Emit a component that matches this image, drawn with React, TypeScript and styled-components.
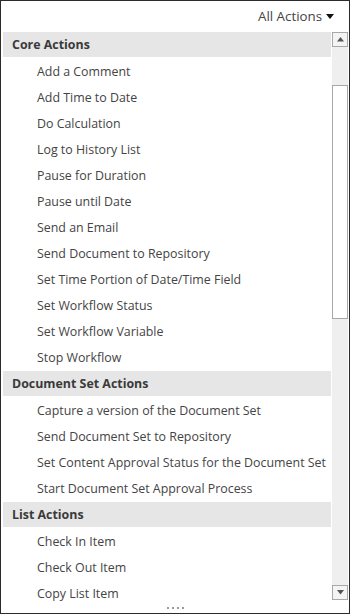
import React from "react";
import styled, { createGlobalStyle } from "styled-components";

const GlobalStyle = createGlobalStyle`
  html, body {
    margin: 0;
    padding: 0;
    background: #ffffff;
  }
  * {
    box-sizing: border-box;
  }
`;

const Panel = styled.div`
  position: relative;
  width: 350px;
  height: 614px;
  border: 1px solid #2b2b2b;
  background: #fff;
  display: flex;
  flex-direction: column;
  overflow: hidden;
  font-family: "Open Sans", "Noto Sans", sans-serif;
`;

const Toolbar = styled.div`
  height: 30px;
  display: flex;
  align-items: center;
  justify-content: flex-end;
  padding-right: 15px;
  font-size: 13.3px;
  color: #444;
  gap: 4px;
  flex-shrink: 0;
`;

const Body = styled.div`
  flex: 1;
  display: flex;
  min-height: 0;
`;

const List = styled.div`
  flex: 1;
  overflow: hidden;
`;

const GroupHeader = styled.div`
  height: 25px;
  margin: 1px 0 1px 2px;
  background: #e6e6e6;
  display: flex;
  align-items: center;
  padding-left: 9px;
  font-weight: 700;
  font-size: 12.4px;
  color: #3a3a3a;
`;

const Item = styled.div`
  height: 26px;
  display: flex;
  align-items: center;
  padding-left: 36px;
  font-size: 12.4px;
  color: #444;
  white-space: nowrap;
`;

const Scrollbar = styled.div`
  width: 16px;
  margin: 1px 1px 13px 1px;
  background: #efefef;
  display: flex;
  flex-direction: column;
`;

const ScrollButton = styled.div`
  height: 15px;
  border: 1px solid #a8a8a8;
  background: #f4f4f4;
  display: flex;
  align-items: center;
  justify-content: center;
`;

const Track = styled.div<{ $top: number }>`
  flex: 1;
  display: flex;
  flex-direction: column;
  padding-top: ${(p) => p.$top}px;
`;

const Thumb = styled.div<{ $size: number }>`
  height: ${(p) => p.$size}px;
  border: 1px solid #a8a8a8;
  background: #fff;
`;

const Grip = styled.div`
  position: absolute;
  left: 0;
  right: 0;
  bottom: 4px;
  display: flex;
  justify-content: center;
  gap: 3px;
`;

const GripDot = styled.span`
  width: 2px;
  height: 2px;
  background: #9a9a9a;
`;

const Caret = ({ up, size = 8, color = "#222" }: { up?: boolean; size?: number; color?: string }) => (
  <svg width={size} height={size / 2 + 1} viewBox="0 0 8 5">
    <path d={up ? "M0 5 L4 0 L8 5 Z" : "M0 0 L8 0 L4 5 Z"} fill={color} />
  </svg>
);

const groups = [
  {
    title: "Core Actions",
    items: [
      "Add a Comment",
      "Add Time to Date",
      "Do Calculation",
      "Log to History List",
      "Pause for Duration",
      "Pause until Date",
      "Send an Email",
      "Send Document to Repository",
      "Set Time Portion of Date/Time Field",
      "Set Workflow Status",
      "Set Workflow Variable",
      "Stop Workflow",
    ],
  },
  {
    title: "Document Set Actions",
    items: [
      "Capture a version of the Document Set",
      "Send Document Set to Repository",
      "Set Content Approval Status for the Document Set",
      "Start Document Set Approval Process",
    ],
  },
  {
    title: "List Actions",
    items: ["Check In Item", "Check Out Item", "Copy List Item"],
  },
];

export default function App() {
  return (
    <>
      <GlobalStyle />
      <Panel>
        <Toolbar>
          <span>All Actions</span>
          <Caret size={8} color="#111" />
        </Toolbar>
        <Body>
          <List>
            {groups.map((g) => (
              <div key={g.title}>
                <GroupHeader>{g.title}</GroupHeader>
                {g.items.map((it) => (
                  <Item key={it}>{it}</Item>
                ))}
              </div>
            ))}
          </List>
          <Scrollbar>
            <ScrollButton>
              <Caret up size={7} color="#555" />
            </ScrollButton>
            <Track $top={38}>
              <Thumb $size={234} />
            </Track>
            <ScrollButton>
              <Caret size={7} color="#555" />
            </ScrollButton>
          </Scrollbar>
        </Body>
        <Grip>
          <GripDot />
          <GripDot />
          <GripDot />
          <GripDot />
        </Grip>
      </Panel>
    </>
  );
}
